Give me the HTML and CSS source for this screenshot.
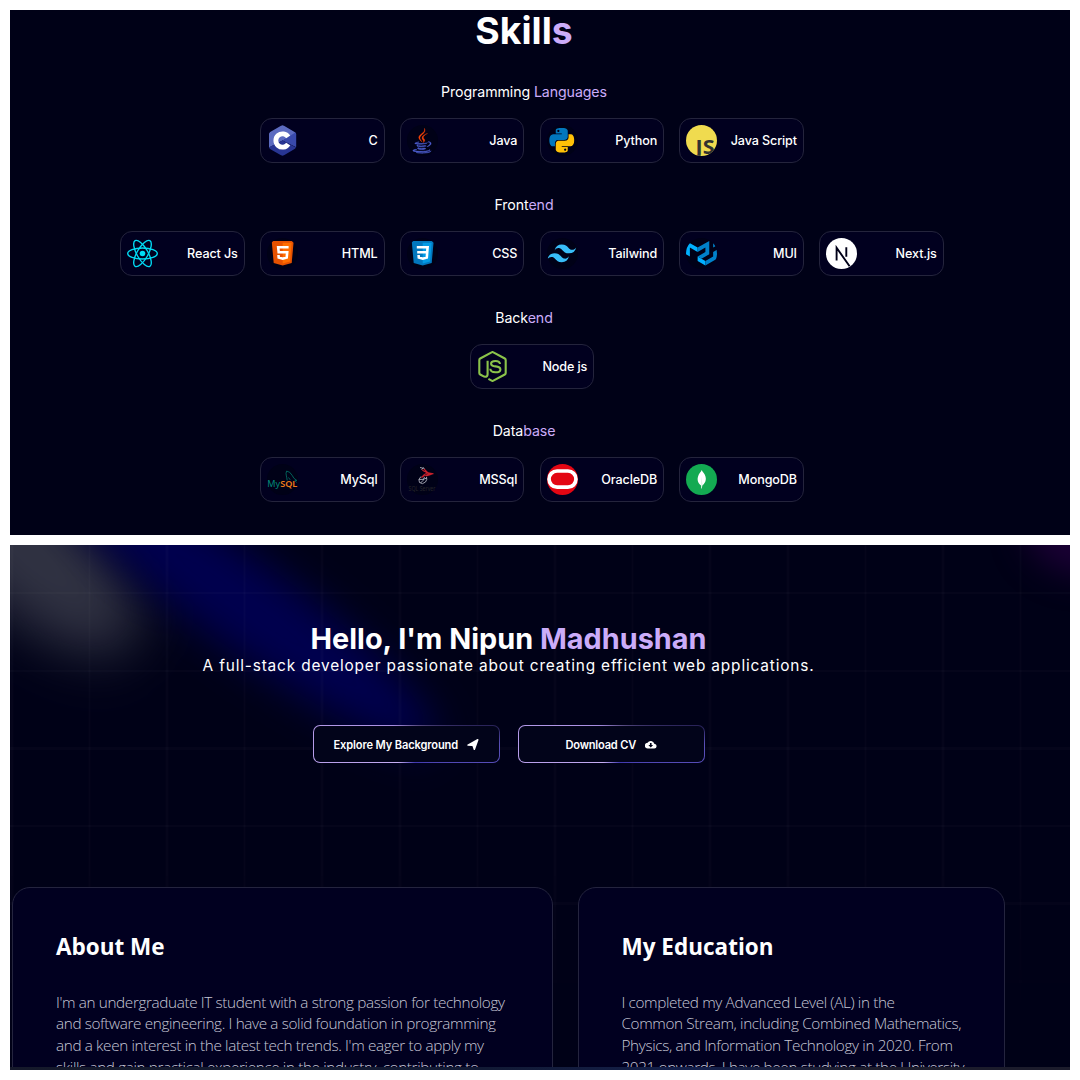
FILE: index.html
```html
<!DOCTYPE html>
<html lang="en">
<head>
<meta charset="utf-8">
<title>Nipun Madhushan</title>
<link rel="stylesheet" href="styles.css">
</head>
<body>
<main class="page">
  <section class="panel skills">
    <h1 class="skills-title">Skill<em>s</em></h1>

    <div class="group">
      <h2 class="group-title">Programming <em>Languages</em></h2>
      <div class="row">
        <div class="skill">
          <svg class="icon" viewBox="0 0 31 31">
            <path fill="#5c6bc0" d="M14 .8q1.500-.9 3 0L28 7.200q1.200.8 1.200 2.300L15.500 15.500 2 22.500V9q0-1.200 1.200-2z"/>
            <path fill="#3949ab" d="M29.200 9v13.300L15.500 15.500 28.400 7.600q.8.600.8 1.400z"/>
            <path fill="#283593" d="M2 22.300 15.500 15.500l13.500 7q-.3.900-1 1.300L17 30.200q-1.500.9-3 0L3 24q-.9-.6-1-1.700z"/>
            <path fill="none" stroke="#fff" stroke-width="4.800" d="M21.200 11.900a6.700 6.700 0 1 0 0 7.200"/>
          </svg>
          <span>C</span>
        </div>
        <div class="skill">
          <svg class="icon dark" viewBox="0 0 31 31">
            <g transform="translate(2.200 3) scale(.199)">
              <path fill="#4f5fd0" stroke="#4f5fd0" stroke-width="2.500" d="M47.617 98.120s-4.767 2.774 3.397 3.710c9.892 1.130 14.947.968 25.845-1.092 0 0 2.871 1.795 6.873 3.351-24.439 10.470-55.308-.607-36.115-5.969zm-2.988-13.665s-5.348 3.959 2.823 4.805c10.567 1.091 18.910 1.180 33.354-1.600 0 0 1.993 2.025 5.132 3.131-29.542 8.640-62.446.680-41.309-6.336zM102.123 108.229s3.529 2.910-3.888 5.159c-14.102 4.272-58.706 5.560-71.094.171-4.451-1.938 3.899-4.625 6.526-5.192 2.739-.593 4.303-.485 4.303-.485-4.953-3.487-32.013 6.850-13.743 9.815 49.821 8.076 90.817-3.637 77.896-9.468zM49.912 70.294s-22.686 5.389-8.033 7.348c6.188.828 18.518.638 30.011-.326 9.390-.789 18.813-2.474 18.813-2.474s-3.308 1.419-5.704 3.053c-23.042 6.061-67.544 3.238-54.731-2.958 10.832-5.239 19.644-4.643 19.644-4.643zm40.697 22.747c23.421-12.167 12.591-23.860 5.032-22.285-1.848.385-2.677.720-2.677.720s.688-1.079 2-1.543c14.953-5.255 26.451 15.503-4.823 23.725 0-.002.359-.327.468-.617zM52.214 126.021c22.476 1.437 57-.8 57.817-11.436 0 0-1.571 4.032-18.577 7.231-19.186 3.612-42.854 3.191-56.887.874 0 .001 2.875 2.381 17.647 3.331z"/>
              <path fill="#f4440a" stroke="#f4440a" stroke-width="1.500" d="M69.802 61.271c6.025 6.935-1.580 13.170-1.580 13.170s15.289-7.891 8.269-17.777c-6.559-9.215-11.587-13.792 15.635-29.580 0 .001-42.731 10.670-22.324 34.187zM76.491 1.587s12.968 12.976-12.303 32.923c-20.266 16.006-4.621 25.130-.007 35.559-11.831-10.673-20.509-20.070-14.688-28.815 8.548-12.834 32.229-19.059 26.998-39.667z"/>
            </g>
          </svg>
          <span>Java</span>
        </div>
        <div class="skill">
          <svg class="icon dark" viewBox="0 0 31 31">
            <g transform="translate(2.400 2.900) scale(1.030)">
              <path fill="#0277bd" d="M14.250.180l.9.200.730.260.590.300.450.320.340.340.250.340.160.330.100.300.040.260.020.200-.010.130V8.500l-.050.630-.130.550-.210.460-.260.380-.300.310-.330.250-.350.190-.350.140-.330.100-.300.070-.260.040-.210.020H8.770l-.690.050-.590.140-.500.220-.410.270-.330.320-.270.350-.200.360-.150.370-.100.350-.070.320-.040.270-.020.210v3.060H3.170l-.210-.030-.280-.070-.320-.120-.350-.180-.360-.260-.360-.360-.350-.460-.320-.590-.280-.730-.210-.880-.140-1.050-.050-1.230.060-1.220.160-1.040.240-.870.320-.710.360-.570.400-.440.420-.330.420-.240.400-.160.360-.100.320-.050.240-.010h.160l.060.010h8.160v-.830H6.180l-.010-2.750-.020-.370.050-.340.110-.310.170-.280.250-.260.310-.230.380-.200.440-.180.510-.150.580-.120.640-.100.710-.060.770-.040.840-.020 1.270.050zm-6.300 1.980l-.230.330-.080.410.080.410.230.340.330.220.410.090.410-.090.330-.220.230-.340.080-.410-.080-.410-.230-.330-.330-.220-.410-.090-.410.090z"/>
              <path fill="#ffc107" d="M21.040 6.110l.280.060.320.120.350.180.360.270.360.350.350.470.320.590.280.730.210.880.140 1.040.050 1.230-.060 1.230-.160 1.040-.240.860-.320.710-.360.570-.400.450-.420.330-.420.240-.400.160-.360.090-.320.050-.240.020-.160-.010h-8.220v.820h5.840l.010 2.760.020.360-.050.340-.110.310-.170.290-.250.250-.310.240-.380.200-.440.170-.510.150-.580.130-.640.090-.710.070-.770.040-.840.010-1.270-.040-1.070-.140-.900-.200-.730-.250-.590-.300-.450-.330-.340-.340-.250-.340-.160-.330-.100-.300-.040-.250-.020-.200.010-.130v-5.340l.050-.640.130-.540.210-.460.260-.380.300-.320.330-.240.350-.200.350-.140.330-.100.300-.060.260-.040.210-.020.130-.010h5.840l.690-.050.590-.140.500-.210.410-.280.330-.320.270-.350.200-.360.150-.360.100-.350.070-.320.040-.280.020-.210V6.070h2.090l.140.010zm-6.470 14.250l-.230.330-.080.410.080.410.230.330.330.230.410.080.410-.080.330-.230.230-.330.080-.410-.080-.410-.230-.330-.330-.230-.410-.080-.410.080z"/>
            </g>
          </svg>
          <span>Python</span>
        </div>
        <div class="skill">
          <svg class="icon" viewBox="0 0 31 31">
            <rect width="31" height="31" fill="#f0db4f"/>
            <text class="js-mark" x="9.500" y="28.600" textLength="19" lengthAdjust="spacingAndGlyphs">JS</text>
          </svg>
          <span>Java Script</span>
        </div>
      </div>
    </div>

    <div class="group">
      <h2 class="group-title">Front<em>end</em></h2>
      <div class="row">
        <div class="skill">
          <svg class="icon square" viewBox="0 0 31 31">
            <circle cx="15.500" cy="15.500" r="2.800" fill="#00dcf5"/>
            <g fill="none" stroke="#00dcf5" stroke-width="1.350">
              <ellipse cx="15.500" cy="15.500" rx="14.800" ry="5.500"/>
              <ellipse cx="15.500" cy="15.500" rx="14.800" ry="5.500" transform="rotate(60 15.500 15.500)"/>
              <ellipse cx="15.500" cy="15.500" rx="14.800" ry="5.500" transform="rotate(120 15.500 15.500)"/>
            </g>
          </svg>
          <span>React Js</span>
        </div>
        <div class="skill">
          <svg class="icon dark" viewBox="0 0 31 31">
            <path fill="#e65100" d="M4.700 2.900h22l-2 22.200-9 2.500-9-2.500z"/>
            <path fill="#ff6d00" d="M15.700 4.800h9l-1.700 18.800-7.300 2z"/>
            <path fill="none" stroke="#fff" stroke-width="2.600" d="M21.600 9.300H11.200l.5 5h8.500l-.5 5.200-4 1.200-4-1.200-.2-2.500"/>
          </svg>
          <span>HTML</span>
        </div>
        <div class="skill">
          <svg class="icon dark" viewBox="0 0 31 31">
            <path fill="#0277bd" d="M4.700 2.900h22l-2 22.200-9 2.500-9-2.500z"/>
            <path fill="#039be5" d="M15.700 4.800h9l-1.700 18.800-7.300 2z"/>
            <path fill="none" stroke="#fff" stroke-width="2.600" d="M9.800 9.300h10.800l-.8 10.200-4 1.200-4-1.200-.2-2.500M10.200 14.300h10"/>
          </svg>
          <span>CSS</span>
        </div>
        <div class="skill">
          <svg class="icon dark" viewBox="0 0 31 31">
            <path fill="#38bdf8" transform="translate(.4 .6) scale(1.200 1.230)" d="M12.001 4.800c-3.200 0-5.200 1.600-6 4.800 1.200-1.600 2.600-2.200 4.200-1.800.913.228 1.565.890 2.288 1.624C13.666 10.618 15.027 12 18.001 12c3.200 0 5.200-1.600 6-4.800-1.200 1.600-2.600 2.200-4.200 1.800-.913-.228-1.565-.890-2.288-1.624C16.337 6.182 14.976 4.800 12.001 4.800zm-6 7.200c-3.200 0-5.200 1.600-6 4.800 1.200-1.600 2.600-2.200 4.200-1.800.913.228 1.565.890 2.288 1.624 1.177 1.194 2.538 2.576 5.512 2.576 3.200 0 5.200-1.600 6-4.800-1.200 1.600-2.600 2.200-4.200 1.800-.913-.228-1.565-.890-2.288-1.624C10.337 13.382 8.976 12 6.001 12z"/>
          </svg>
          <span>Tailwind</span>
        </div>
        <div class="skill">
          <svg class="icon dark" viewBox="0 0 31 31">
            <g transform="translate(0 2.900) scale(.0517)">
              <path fill="#00b0ff" d="M0 259.800V0l225 129.900v86.600L75 129.900v173.200zM225 303.100v86.600l150 86.600v-86.600z"/>
              <path fill="#0081cb" d="M225 129.900L450 0v259.800L300 346.400l-75-43.300 150-86.600v-86.600l-150 86.600zM375 476.300l225-129.900V173.200l-75 43.300v86.600l-150 86.600zm150-346.400V43.300L600 0v86.600z"/>
            </g>
          </svg>
          <span>MUI</span>
        </div>
        <div class="skill">
          <svg class="icon" viewBox="0 0 31 31">
            <rect width="31" height="31" fill="#fff"/>
            <path fill="none" stroke="#000018" stroke-width="1.900" d="M10.600 22.600V9.800L23.600 28.200M20.300 9.200v9.600"/>
          </svg>
          <span>Next.js</span>
        </div>
      </div>
    </div>

    <div class="group">
      <h2 class="group-title">Back<em>end</em></h2>
      <div class="row">
        <div class="skill">
          <svg class="icon square" viewBox="0 0 31 31">
            <g fill="none" stroke="#8bc34a" stroke-width="2.100" stroke-linejoin="round">
              <path d="M10.600 9.800v13.400q0 2.600-2.600 2.600-.9 0-1.800-.6L3.200 23.500q-.9-.5-.9-1.500V9q0-1 .9-1.500L14.600 1.300q.9-.5 1.800 0L27.800 7.500q.9.500.9 1.500v13q0 1-.9 1.500l-11.400 6.200q-.9.500-1.800 0l-3.200-1.800"/>
              <path d="M23 13q-.3-3-4.600-3-4.300 0-4.300 2.700 0 2.200 4.400 2.700 4.900.5 4.900 3 0 2.900-5 2.900-4.900 0-5.100-3.500"/>
            </g>
          </svg>
          <span>Node js</span>
        </div>
      </div>
    </div>

    <div class="group">
      <h2 class="group-title">Data<em>base</em></h2>
      <div class="row">
        <div class="skill">
          <svg class="icon dark unclipped" viewBox="0 0 31 31">
            <text class="mysql-mark" x=".3" y="23" textLength="30" lengthAdjust="spacingAndGlyphs"><tspan fill="#00897b">My</tspan><tspan class="sql" fill="#f07c1a">SQL</tspan></text>
            <path fill="none" stroke="#00796b" stroke-width=".8" d="M20.200 16.400q-.5-3-.8-4.500-.9-2.500.2-4.800 3.300.2 5.500 4.200 1.200 3.300 4.800 5.200l-2 .2 1.700 1.800M21.500 13.500l1.700 2.300"/>
          </svg>
          <span>MySql</span>
        </div>
        <div class="skill">
          <svg class="icon dark unclipped" viewBox="0 0 31 31">
            <path fill="none" stroke="#a9abb8" stroke-width=".9" d="M14 12.500q-3.500 3-1.500 6 3 2.500 6-.5 2-2.500 1-5M12 15.500q4 .5 8-1.500M13.500 19q3-2 4-6M13 3.500l4.500 1M14.500 5.500l2-2"/>
            <path fill="none" stroke="#c8202b" stroke-width="1.100" d="M15 5.500q2 3 11.500 4.200-7 0-12 3.800 2.500-3.500 5.500-4.500M17 5l4 4M19 8.500l5 2-5 1.500"/>
            <text class="mssql-mark" x="1.500" y="26.500" textLength="27" lengthAdjust="spacingAndGlyphs">SQL Server</text>
          </svg>
          <span>MSSql</span>
        </div>
        <div class="skill">
          <svg class="icon" viewBox="0 0 31 31">
            <rect width="31" height="31" fill="#e30613"/>
            <rect x="2" y="7" width="27" height="16.200" rx="8.100" fill="none" stroke="#fff" stroke-width="3.700"/>
          </svg>
          <span>OracleDB</span>
        </div>
        <div class="skill">
          <svg class="icon" viewBox="0 0 31 31">
            <rect width="31" height="31" fill="#13aa52"/>
            <path fill="#fff" d="M15.700 6q.6 1.400 2 2.900c3.700 5 2.300 9.800-1.500 12.500l-.3 3h-.6l-.3-3C11.100 18.500 10.500 14 13.700 9q1.500-1.500 2-3z"/>
            <path fill="#b8e3c9" d="M15.700 12.500l.6 8.500-.4 3h-.4z"/>
          </svg>
          <span>MongoDB</span>
        </div>
      </div>
    </div>
  </section>

  <section class="panel hero">
    <div class="backdrop">
      <div class="glow glow-gray"></div>
      <div class="glow glow-blue"></div>
      <div class="glow glow-violet"></div>
      <div class="grid-lines"></div>
    </div>
    <header class="intro">
      <h1 class="hello">Hello, I'm Nipun <em>Madhushan</em></h1>
      <p class="tagline">A full-stack developer passionate about creating efficient web applications.</p>
      <div class="actions">
        <a class="button"><span class="button-face">Explore My Background
          <svg class="button-icon" viewBox="0 0 512 512"><path fill="#fff" d="M511 50 356 484c-8 24-42 27-53 3l-62-178-38-1L27 295c-25-11-22-45 3-53L464 2c30-10 57 18 47 48z"/></svg></span></a>
        <a class="button"><span class="button-face second">Download CV
          <svg class="button-icon" viewBox="0 0 24 24"><path fill="#fff" d="M19.400 10A7.500 7.500 0 0 0 5.400 8 6 6 0 0 0 6 20h13a5 5 0 0 0 .4-10z"/><path fill="#02041a" d="M10.300 8.500h3.400v4h3.300l-5 5-5-5h3.300z"/></svg></span></a>
      </div>
    </header>
    <div class="bento">
      <article class="card about">
        <h2>About Me</h2>
        <p>I'm an undergraduate IT student with a strong passion for technology<br>and software engineering. I have a solid foundation in programming<br>and a keen interest in the latest tech trends. I'm eager to apply my<br>skills and gain practical experience in the industry, contributing to</p>
      </article>
      <article class="card education">
        <h2>My Education</h2>
        <p>I completed my Advanced Level (AL) in the<br>Common Stream, including Combined Mathematics,<br>Physics, and Information Technology in 2020. From<br>2021 onwards, I have been studying at the University</p>
      </article>
    </div>
    <div class="edge"></div>
  </section>
</main>
</body>
</html>
```
FILE: styles.css
```css
* { box-sizing: border-box; margin: 0; padding: 0; }
body { background: #fff; font-family: Inter, sans-serif; color: #fff; }
em { font-style: normal; color: #cbacf9; }
.page { width: 1080px; height: 1080px; padding: 10px; display: flex; flex-direction: column; gap: 10px; overflow: hidden; }
.panel { height: 525px; background: #000117; overflow: hidden; position: relative; }

.skills { padding-right: 32px; display: flex; flex-direction: column; align-items: center; }
.skills-title { font-size: 37.300px; line-height: 42px; font-weight: 700; margin-bottom: 28.500px; }
.group { height: 113px; display: flex; flex-direction: column; align-items: center; gap: 15px; }
.group-title { font-size: 14.200px; line-height: 22px; font-weight: 400; letter-spacing: -0.100px; }
.row { display: flex; gap: 15.300px; padding-left: 16px; }
.skill { width: 124.500px; height: 45px; padding: 0 6px; display: flex; align-items: center; justify-content: space-between; border: 1px solid #24243c; border-radius: 12px; background: #01001f; font-size: 12.600px; font-weight: 500; letter-spacing: -0.120px; }
.icon { width: 31px; height: 31px; border-radius: 50%; overflow: hidden; letter-spacing: 0; }
.icon.square { border-radius: 0; }
.icon.dark { background: #000117; }
.icon.unclipped { overflow: visible; }
.js-mark { font: 700 19.500px "Noto Sans", sans-serif; fill: #323330; }
.mysql-mark { font: 400 9.500px "Noto Sans", sans-serif; }
.mysql-mark .sql { font-weight: 600; }
.mssql-mark { font: 400 6.500px "Noto Sans", sans-serif; fill: #25252b; }

.backdrop { position: absolute; inset: 0; overflow: hidden; }
.glow { position: absolute; border-radius: 50%; }
.glow-gray { left: -115px; top: -52px; width: 270px; height: 120px; background: #303242; filter: blur(27px); transform: rotate(42deg); }
.glow-blue { left: -10px; top: 11px; width: 480px; height: 90px; background: #00004e; filter: blur(20px); transform: rotate(36deg); }
.glow-violet { right: -75px; top: -70px; width: 120px; height: 100px; background: #1a0034; filter: blur(16px); }
.grid-lines {
  position: absolute;
  inset: 0;
  background:
    repeating-linear-gradient(90deg, rgba(255,255,255,.02) 0 2.500px, transparent 2.500px 77.600px) 0.500px 0 / 1100px 100%,
    repeating-linear-gradient(180deg, rgba(255,255,255,.02) 0 2.500px, transparent 2.500px 77.600px) 0 47px / 100% 776px;
  mask-image: linear-gradient(#000 60%, transparent 90%);
}

.intro { position: relative; height: 342px; padding: 77px 63px 0 0; display: flex; flex-direction: column; align-items: center; }
.hello { font-size: 28.850px; line-height: 34px; font-weight: 700; }
.tagline { font-size: 15.400px; line-height: 19px; letter-spacing: 0.840px; white-space: nowrap; }
.actions { display: flex; gap: 18px; margin-top: 50px; }
.button { width: 187px; height: 38px; padding: 1px; border-radius: 7px; background: conic-gradient(from 90deg at 50% 50%, #5a50b8 0%, #4038b0 18%, #c9b0f5 32%, #a58be0 65%, #54487e 85%, #282258 97%, #5a50b8 100%); }
.button-face { height: 100%; border-radius: 6px; background: #02041a; display: flex; align-items: center; justify-content: center; gap: 9px; padding-top: 1px; font-size: 11.100px; font-weight: 600; letter-spacing: -0.130px; }
.button-face.second { letter-spacing: -0.200px; }
.button-icon { width: 11.500px; height: 11.500px; }

.bento { position: relative; padding-left: 2px; display: flex; align-items: flex-start; gap: 24.500px; }
.card { height: 260px; padding: 43px 0 0 43px; border: 1px solid #24243e; border-radius: 18px; background: #010020; font-family: "Open Sans", sans-serif; white-space: nowrap; }
.about { width: 541px; }
.education { width: 427.500px; }
.card h2 { font-size: 22.500px; line-height: 32px; font-weight: 700; }
.card p { margin-top: 28.500px; font-size: 15.300px; line-height: 21.800px; font-weight: 300; letter-spacing: -0.370px; color: #c6c7d6; }
.edge { position: absolute; left: 0; right: 0; bottom: 0; height: 3px; background: linear-gradient(90deg, #15192a, #121a35 45%, #14204c 65%, #1c1c2c 80%); }
```
